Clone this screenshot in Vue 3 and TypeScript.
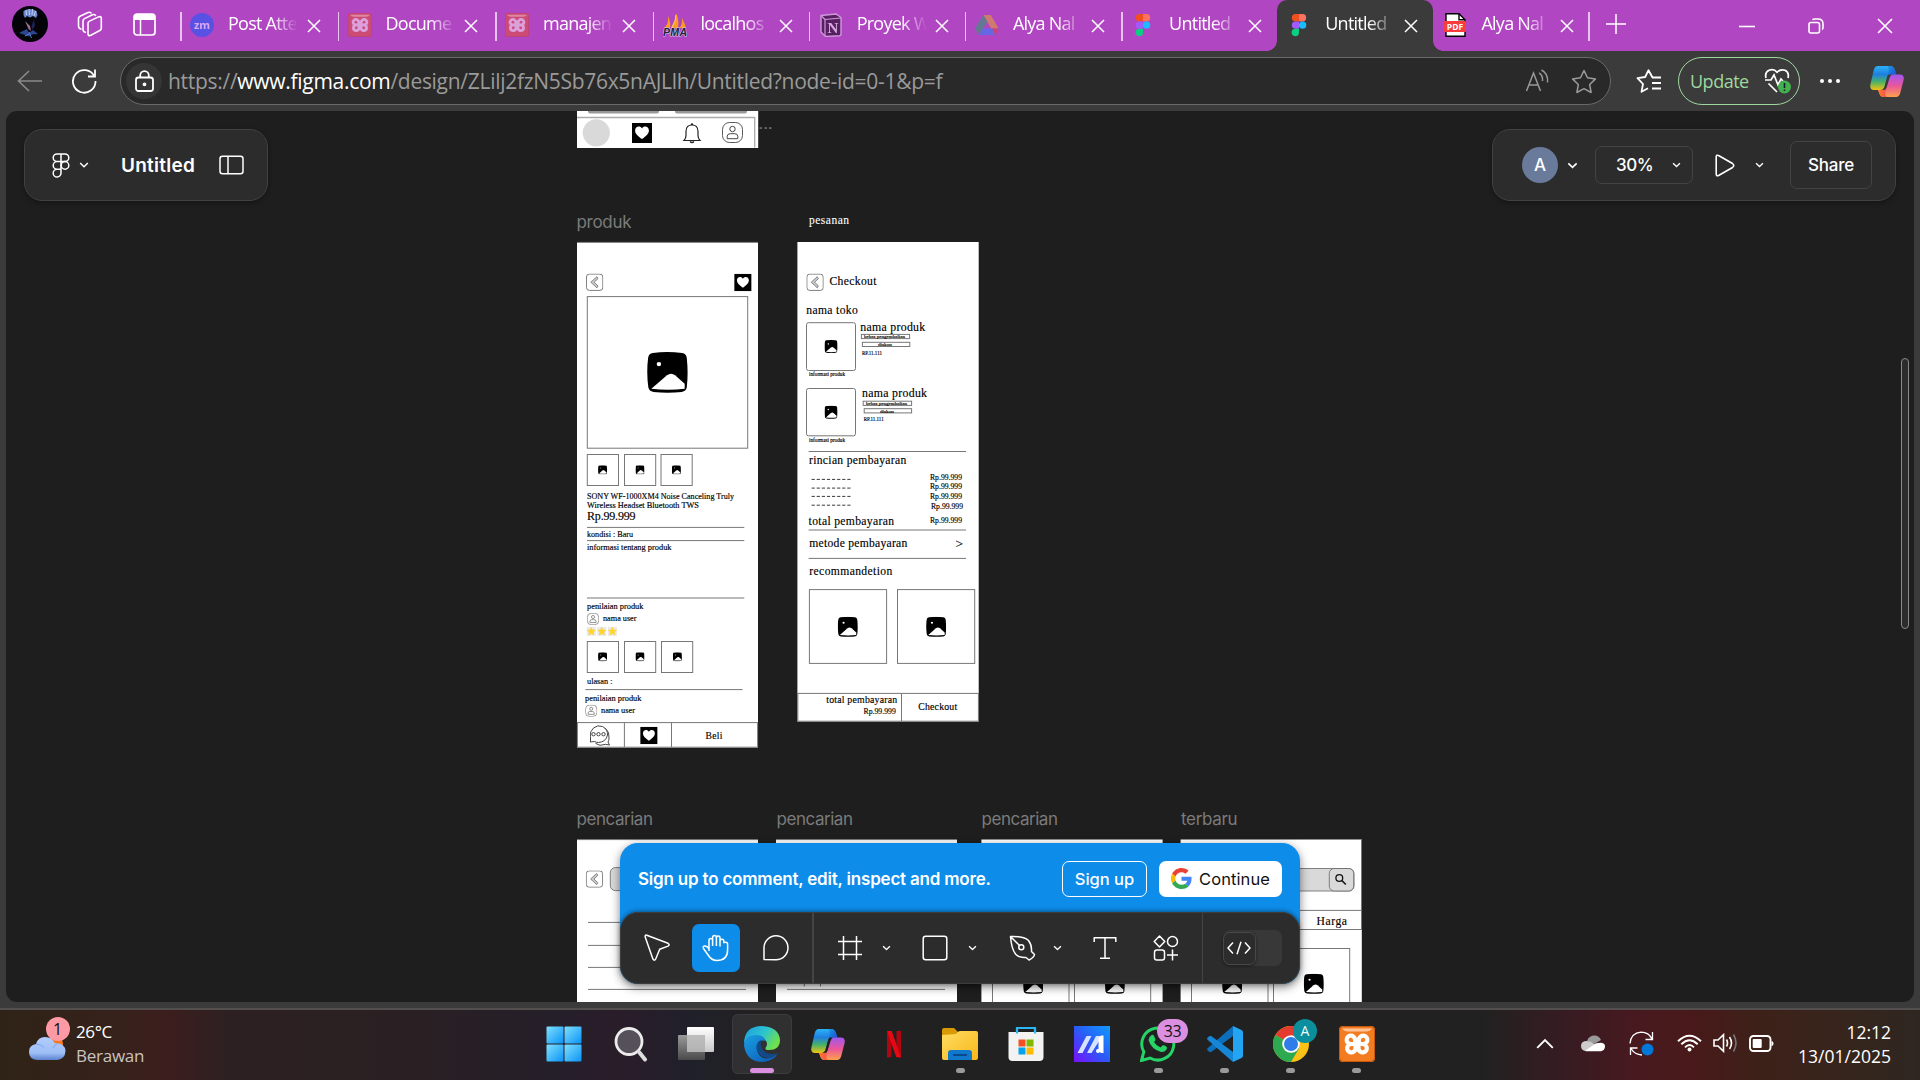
<script setup lang="ts">
interface Tab { title: string; icon: string; active?: boolean; plain?: boolean }
interface Label { x: number; y: number; w: number; t: string; s: number }
interface Box { x: number; y: number; w: number; h: number; r?: number }
interface Line { x1: number; y1: number; x2: number; y2: number }

const tabs: Tab[] = [
  { title: 'Post Atte', icon: 'zoom' },
  { title: 'Docume', icon: 'xampp' },
  { title: 'manajen', icon: 'xampp' },
  { title: 'localhos', icon: 'pma' },
  { title: 'Proyek W', icon: 'notion' },
  { title: 'Alya Nal', icon: 'drive' },
  { title: 'Untitled', icon: 'figma' },
  { title: 'Untitled', icon: 'figma', active: true },
  { title: 'Alya Nal', icon: 'pdf', plain: true },
]

const frames: Box[] = [
  { x: 577, y: 105, w: 181.2, h: 43 },
  { x: 577, y: 242, w: 181, h: 505.7 },
  { x: 797.4, y: 242, w: 181.3, h: 479.7 },
  { x: 577, y: 839.5, w: 181, h: 170 },
  { x: 776, y: 839.5, w: 181, h: 170 },
  { x: 981.4, y: 839.5, w: 181.2, h: 170 },
  { x: 1180.6, y: 839.5, w: 181.2, h: 170 },
]

const frameNames: Label[] = [
  { x: 576.5, y: 228, w: 55, t: 'produk', s: 17 },
  { x: 576.5, y: 825.4, w: 76.5, t: 'pencarian', s: 17 },
  { x: 776.5, y: 825.4, w: 76.5, t: 'pencarian', s: 17 },
  { x: 981.5, y: 825.4, w: 76.5, t: 'pencarian', s: 17 },
  { x: 1181, y: 825.4, w: 56.5, t: 'terbaru', s: 17 },
]

const copy: Label[] = [
  { x: 587, y: 498.7, w: 147, t: 'SONY WF-1000XM4 Noise Canceling Truly', s: 7.8 },
  { x: 587, y: 507.8, w: 112, t: 'Wireless Headset Bluetooth TWS', s: 7.8 },
  { x: 587, y: 519.6, w: 48.5, t: 'Rp.99.999', s: 12 },
  { x: 587, y: 537.3, w: 46, t: 'kondisi : Baru', s: 7.8 },
  { x: 587, y: 549.5, w: 84.5, t: 'informasi tentang produk', s: 7.8 },
  { x: 587, y: 609.3, w: 56.5, t: 'penilaian produk', s: 7.8 },
  { x: 603, y: 621.2, w: 33.5, t: 'nama user', s: 7.8 },
  { x: 587, y: 683.8, w: 25.5, t: 'ulasan :', s: 7.8 },
  { x: 585, y: 700.8, w: 56.5, t: 'penilaian produk', s: 7.8 },
  { x: 601, y: 712.8, w: 34, t: 'nama user', s: 7.8 },
  { x: 705.5, y: 739.2, w: 16.8, t: 'Beli', s: 9.6 },
  { x: 829.5, y: 285.2, w: 47, t: 'Checkout', s: 11.6 },
  { x: 806.3, y: 314, w: 51.4, t: 'nama toko', s: 11.6 },
  { x: 860.2, y: 331.4, w: 65, t: 'nama produk', s: 11.8 },
  { x: 862, y: 397.4, w: 65, t: 'nama produk', s: 11.8 },
  { x: 864, y: 338, w: 41, t: 'bebas pengembalian', s: 5 },
  { x: 866, y: 404.8, w: 41, t: 'bebas pengembalian', s: 5 },
  { x: 878, y: 346, w: 14, t: 'diskon', s: 5 },
  { x: 880, y: 412.6, w: 14, t: 'diskon', s: 5 },
  { x: 862, y: 354.6, w: 20, t: 'RP.11.111', s: 5.2 },
  { x: 863.7, y: 421, w: 20, t: 'RP.11.111', s: 5.2 },
  { x: 809, y: 376.4, w: 36, t: 'informasi produk', s: 5.2 },
  { x: 809, y: 442, w: 36, t: 'informasi produk', s: 5.2 },
  { x: 809, y: 464.2, w: 97.3, t: 'rincian pembayaran', s: 11.6 },
  { x: 930, y: 479.6, w: 32, t: 'Rp.99.999', s: 7.8 },
  { x: 930, y: 488.5, w: 32, t: 'Rp.99.999', s: 7.8 },
  { x: 930, y: 499, w: 32, t: 'Rp.99.999', s: 7.8 },
  { x: 931, y: 509.2, w: 32, t: 'Rp.99.999', s: 7.8 },
  { x: 930, y: 522.8, w: 32, t: 'Rp.99.999', s: 7.8 },
  { x: 808.6, y: 524.7, w: 85.4, t: 'total pembayaran', s: 11.6 },
  { x: 809.3, y: 546.6, w: 98, t: 'metode pembayaran', s: 11.6 },
  { x: 955.5, y: 548.4, w: 7.5, t: '>', s: 11.5 },
  { x: 809.3, y: 575, w: 83, t: 'recommandetion', s: 11.6 },
  { x: 826.2, y: 702.8, w: 71, t: 'total pembayaran', s: 9.8 },
  { x: 863.5, y: 713.6, w: 32.3, t: 'Rp.99.999', s: 7.8 },
  { x: 918.2, y: 709.5, w: 39, t: 'Checkout', s: 9.8 },
  { x: 1316.6, y: 924.6, w: 30.4, t: 'Harga', s: 11.6 },
]

const boxes: Box[] = [
  { x: 587.3, y: 296.6, w: 160.4, h: 151.6 },
  { x: 587.3, y: 454.5, w: 31.2, h: 31 }, { x: 624.5, y: 454.5, w: 31.2, h: 31 }, { x: 661, y: 454.5, w: 31.2, h: 31 },
  { x: 587.3, y: 641.5, w: 31.2, h: 31 }, { x: 624.5, y: 641.5, w: 31.2, h: 31 }, { x: 661.5, y: 641.5, w: 31.2, h: 31 },
  { x: 577.4, y: 722.6, w: 180.2, h: 24.6 },
  { x: 806.5, y: 322.7, w: 49, h: 47.8, r: 2 }, { x: 806.5, y: 388.5, w: 49, h: 47.3, r: 2 },
  { x: 861.4, y: 334.4, w: 48.2, h: 4.2 }, { x: 862.4, y: 342.3, w: 47.4, h: 4.2 },
  { x: 863.2, y: 401.2, w: 48.4, h: 4.2 }, { x: 864.2, y: 408.7, w: 47.4, h: 4.2 },
  { x: 809.4, y: 589.6, w: 77.2, h: 73.8 }, { x: 897.5, y: 589.6, w: 77.2, h: 73.8 },
  { x: 797.8, y: 693.4, w: 180.6, h: 27.8 },
  { x: 992.5, y: 948.5, w: 76.5, h: 70 }, { x: 1074.5, y: 948.5, w: 76.2, h: 70 },
  { x: 1191.5, y: 948.5, w: 76.5, h: 70 }, { x: 1273.5, y: 948.5, w: 76.2, h: 70 },
]

const lines: Line[] = [
  { x1: 587, y1: 527.4, x2: 744.3, y2: 527.4 }, { x1: 587, y1: 540.6, x2: 744.3, y2: 540.6 },
  { x1: 587, y1: 598, x2: 744.3, y2: 598 }, { x1: 585.3, y1: 689.6, x2: 742.6, y2: 689.6 },
  { x1: 624.4, y1: 722.6, x2: 624.4, y2: 747 }, { x1: 671.5, y1: 722.6, x2: 671.5, y2: 747 },
  { x1: 577, y1: 242.4, x2: 758, y2: 242.4 },
  { x1: 808.6, y1: 451.5, x2: 966, y2: 451.5 }, { x1: 808.6, y1: 530, x2: 966, y2: 530 },
  { x1: 808.6, y1: 558.4, x2: 966, y2: 558.4 }, { x1: 901.5, y1: 693.4, x2: 901.5, y2: 721 },
  { x1: 588, y1: 922.4, x2: 746, y2: 922.4 }, { x1: 588, y1: 945.4, x2: 746, y2: 945.4 },
  { x1: 588, y1: 967.4, x2: 746, y2: 967.4 }, { x1: 588, y1: 989.4, x2: 746, y2: 989.4 },
  { x1: 787, y1: 989.4, x2: 945, y2: 989.4 },
  { x1: 1180.6, y1: 910.4, x2: 1361.8, y2: 910.4 }, { x1: 1180.6, y1: 929.5, x2: 1361.8, y2: 929.5 },
  { x1: 1361.5, y1: 839.5, x2: 1361.5, y2: 929.5 },
  { x1: 804.3, y1: 984, x2: 804.3, y2: 986.4 }, { x1: 820.5, y1: 984, x2: 820.5, y2: 986.4 },
  { x1: 577, y1: 839.6, x2: 758, y2: 839.6 }, { x1: 776, y1: 839.6, x2: 957, y2: 839.6 },
]

const dashes = [479.4, 488.1, 496.4, 505.2]

const pictures: { x: number; y: number; s: number }[] = [
  { x: 646.8, y: 352, s: 41.4 },
  { x: 598, y: 465.3, s: 9.2 }, { x: 635.4, y: 465.3, s: 9.2 }, { x: 671.8, y: 465.3, s: 9.2 },
  { x: 598, y: 652.2, s: 9.2 }, { x: 635.4, y: 652.2, s: 9.2 }, { x: 672.8, y: 652.2, s: 9.2 },
  { x: 824.4, y: 340, s: 13.3 }, { x: 824.4, y: 405.6, s: 13.3 },
  { x: 837.6, y: 616.8, s: 20.4 }, { x: 926, y: 616.8, s: 20.4 },
  { x: 1023, y: 973.8, s: 20.4 }, { x: 1104.7, y: 973.8, s: 20.4 },
  { x: 1222, y: 973.8, s: 20.4 }, { x: 1303.6, y: 973.8, s: 20.4 },
]
const hearts = [{ x: 632, y: 123, s: 20 }, { x: 734.2, y: 273.8, s: 17.4 }, { x: 640.2, y: 726.8, s: 17.4 }]
const backs = [{ x: 586, y: 273.6 }, { x: 806.4, y: 273.6 }, { x: 585.8, y: 870.4 }]
const users = [{ x: 722, y: 122, s: 21 }, { x: 587, y: 613, s: 12 }, { x: 585.2, y: 704.8, s: 12 }]
const stars = [591.3, 601.8, 612.4]

const apps: { id: string; run?: boolean; on?: boolean; badge?: string }[] = [
  { id: 'windows' }, { id: 'search' }, { id: 'taskview' }, { id: 'edge', on: true }, { id: 'copilot' },
  { id: 'netflix' }, { id: 'explorer', run: true }, { id: 'store' }, { id: 'asus' },
  { id: 'whatsapp', run: true, badge: '33' }, { id: 'vscode', run: true }, { id: 'chrome', run: true, badge: 'A' },
  { id: 'xampp', run: true },
]
</script>

<template>
  <div class="screen">
    <svg class="defs" width="0" height="0" aria-hidden="true">
      <defs>
        <linearGradient id="gCopA" x1="0" y1="0" x2="0" y2="1"><stop offset="0" stop-color="#2bb3f5" /><stop offset=".35" stop-color="#1f7fe0" /><stop offset=".65" stop-color="#46b16a" /><stop offset="1" stop-color="#f2c40f" /></linearGradient>
        <linearGradient id="gCopB" x1="0" y1="0" x2="0" y2="1"><stop offset="0" stop-color="#a256f0" /><stop offset=".5" stop-color="#e9569c" /><stop offset="1" stop-color="#ffa04a" /></linearGradient>
        <linearGradient id="gCopC" x1="0" y1="0" x2="1" y2="1"><stop offset="0" stop-color="#1b9be8" /><stop offset="1" stop-color="#1a45d0" /></linearGradient>
        <linearGradient id="gCopD" x1="0" y1="0" x2="1" y2="0"><stop offset="0" stop-color="#ff7a2e" /><stop offset="1" stop-color="#ef5350" /></linearGradient>
        <linearGradient id="gWin" x1="0" y1="0" x2="1" y2="1"><stop offset="0" stop-color="#7fe0ff" /><stop offset="1" stop-color="#0a93f5" /></linearGradient>
        <linearGradient id="gEdgeTop" x1="0" y1="0" x2="1" y2=".5"><stop offset="0" stop-color="#1f9be0" /><stop offset=".55" stop-color="#2cc3cf" /><stop offset="1" stop-color="#6fe04e" /></linearGradient>
        <linearGradient id="gEdgeLow" x1="0" y1="0" x2="1" y2="1"><stop offset="0" stop-color="#1aa0e2" /><stop offset="1" stop-color="#0b55b4" /></linearGradient>
        <linearGradient id="gFold" x1="0" y1="0" x2="1" y2="1"><stop offset="0" stop-color="#ffdc62" /><stop offset="1" stop-color="#f8b71a" /></linearGradient>
        <linearGradient id="gAsus" x1="1" y1="0" x2="0" y2="1"><stop offset="0" stop-color="#0f9bff" /><stop offset=".5" stop-color="#2a5bf6" /><stop offset="1" stop-color="#7a10ff" /></linearGradient>
        <linearGradient id="gBack" x1="0" y1="0" x2="0" y2="1"><stop offset="0" stop-color="#9a9a9a" /><stop offset="1" stop-color="#4a4a4a" /></linearGradient>
        <linearGradient id="gFront" x1="0" y1="0" x2="0" y2="1"><stop offset="0" stop-color="#fff" /><stop offset="1" stop-color="#c8c8c8" /></linearGradient>
        <linearGradient id="gCloud" x1="0" y1="0" x2="0" y2="1"><stop offset="0" stop-color="#b3ceff" /><stop offset=".7" stop-color="#9dbdf5" /><stop offset="1" stop-color="#5c82cf" /></linearGradient>
        <symbol id="copilot" viewBox="0 0 34 31">
          <path d="M8 0h12c3 0 4 1.500 5 4.500l1.300 4H21c-2.500 0-3.500 1-4.300 4L14.300 21c-.8 2-2 3-4.300 3H4C1 24-.3 22 .4 18.500L3.500 5C4.300 1.800 5.500 0 8 0z" fill="url(#gCopA)" />
          <path d="M17 0h3c3 0 4 1.500 5 4.500l1.300 4H21c-2 0-3.200.8-4 3L18.500 5c.6-2.500.2-4-1.500-5z" fill="url(#gCopC)" />
          <path d="M26 31H14c-3 0-4-1.500-5-4.500L8 24h4.500c2.500 0 3.700-1 4.500-4l2.500-8c.8-2.500 2-3.500 4.300-3.500H30c3 0 4.300 2 3.600 5.500L30.500 26c-.8 3.200-2 5-4.500 5z" fill="url(#gCopB)" />
          <path d="M17 31h-3c-3 0-4-1.500-5-4.500L8 24h4.500c2 0 3.200-.8 4-3L15.500 26c-.6 2.500-.2 4 1.500 5z" fill="url(#gCopD)" />
          <path d="M17.600 9.800q.5-1.300 1.800-1.300h1.600q-1.300.8-1.800 2.500l-2.800 10.500q-.6 2.500-2.600 2.500h-.8q1.500-.7 2-2.500z" fill="currentColor" />
        </symbol>
        <symbol id="logo8" viewBox="0 0 36 36">
          <path d="M16 13.500A4.200 4.200 0 1 0 12.500 18A4.200 4.200 0 1 0 16.500 23V19.500M20 13.500A4.200 4.200 0 1 1 23.500 18A4.200 4.200 0 1 1 19.500 23V19.500M16.200 13v3M19.800 13v3M13 18h10" fill="none" stroke="currentColor" stroke-width="4.200" stroke-linecap="round" />
        </symbol>
        <symbol id="xampp" viewBox="0 0 36 36">
          <rect width="36" height="36" rx="4" fill="#f47c20" /><rect width="35" height="35" x=".5" y=".5" rx="4" fill="none" stroke="#c5580c" stroke-width="1" />
          <path d="M3 2.500h30q-2 3-6 3H9q-4 0-6-3z" fill="#ffc397" />
          <use href="#logo8" width="36" height="36" color="#fff" />
        </symbol>
        <symbol id="xamppDoc" viewBox="0 0 36 36">
          <rect width="36" height="36" rx="4" fill="#cc4c76" /><rect width="35" height="35" x=".5" y=".5" rx="4" fill="none" stroke="#bb3d7c" />
          <path d="M3 2.500h30q-2 3-6 3H9q-4 0-6-3z" fill="#dd87a4" />
          <use href="#logo8" width="36" height="36" color="#dca0dd" />
        </symbol>
        <symbol id="chev" viewBox="0 0 10 6"><path d="M1.200 1 5 4.700 8.800 1" fill="none" stroke="#fff" stroke-width="1.500" /></symbol>
        <symbol id="pic" viewBox="0 0 41 41"><path d="M6 1Q20 -.8 35 1q4 .6 4.600 5 1.600 15 0 29-.6 4-5 4.500-14 1.500-28 0Q2.300 39 1.500 35-.5 20 1.300 6 1.800 1.600 6 1z" fill="#000" /><circle cx="12" cy="12" r="2.200" fill="#fff" /><path d="M4.500 36.500 20 23q4-3 8 0l9.500 8.500v5q-16 2-33 0z" fill="#fff" /></symbol>
        <symbol id="heart" viewBox="0 0 18 18"><rect width="18" height="18" fill="#000" /><path d="M9 14.500C5 11.500 2.800 9.500 2.800 6.700c0-3.700 4.500-4.700 6.200-1.700 1.700-3 6.200-2 6.200 1.700 0 2.800-2.200 4.800-6.200 7.800z" fill="#fff" /></symbol>
        <symbol id="user" viewBox="0 0 21 21"><rect x=".5" y=".5" width="20" height="20" rx="7" fill="none" stroke="#444" stroke-width=".9" /><circle cx="10.500" cy="7" r="2.700" fill="none" stroke="#333" stroke-width=".9" /><path d="M5.200 16.700v-2.500q.2-2.500 3-2.500h4.600q2.800 0 3 2.500v2.500z" fill="none" stroke="#333" stroke-width=".9" /></symbol>
        <symbol id="back" viewBox="0 0 18 18"><rect x=".5" y=".5" width="17" height="17" rx="3" fill="#fff" stroke="#555" stroke-width=".8" /><path d="m11.300 3.200-6.300 5.800 6.300 5.800 1.200-2-4-3.800 4-3.800z" fill="#ccc" stroke="#555" stroke-width=".7" /></symbol>
      </defs>
    </svg>

    <header class="tabbar">
      <div class="profile">
        <svg width="36" height="36" viewBox="0 0 36 36"><circle cx="18" cy="18" r="18" fill="#030308" /><path d="M11.500 5q6.500-4 13 0l1 4-1.500 3-3-2-3 1.500-3-1.500-2 2-1.500-3z" fill="#6d86cc" /><path d="m14 4 .5 5M17 3l.5 6M20.500 3l-.5 6M23.500 5l-1.500 5" stroke="#cdd9fa" fill="none" stroke-width=".9" /><path d="m13 15 3.500 8 2.500 2-1-5z" fill="#a26c9c" /><path d="m7 27 8-4 2 4 4-3 5 4-6 .5-3 2-4-1.500z" fill="#2b4690" /><path d="m22 13 1 7-3 4-.5-4z" fill="#1c2450" /><path d="m17 26 2.500 6M13 30l4-2" stroke="#5f8bd0" stroke-width=".9" /></svg>
      </div>
      <svg class="spaces" width="26" height="26" viewBox="0 0 26 26" fill="none" stroke="#fff" stroke-width="1.600" stroke-linejoin="round" stroke-linecap="round"><path d="M11 12.500q0-1.700 1.500-2.400l9-4.200q2.800-1 2.800 1.400V17q0 1.700-1.500 2.500l-9 4.800q-2.800 1-2.800-1.500z" /><path d="M8.300 21.300Q6 20.800 6 18.300V10q0-1.700 1.500-2.400l8-3.800q2-.8 3 .6M4 18Q1.500 17.300 1.500 15V7.500q0-1.600 1.500-2.300L11 1.500q2-.8 3 .5" /></svg>
      <svg class="vtabs" width="23" height="23" viewBox="0 0 23 23"><rect x="1" y="1" width="21" height="21" rx="3" fill="none" stroke="#fff" stroke-width="1.700" /><path d="M1 4q0-3 3-3h15q3 0 3 3v3H1z" fill="#fff" /><path d="M7.500 7v15" stroke="#fff" stroke-width="1.500" /></svg>
      <nav class="tabs">
        <div v-for="(t, i) in tabs" :key="i" class="tab" :class="{ active: t.active, plain: t.plain, wide: i < 3 }">
          <svg class="fav" :class="{ dim: ['zoom', 'notion', 'drive'].includes(t.icon) }" width="24" height="24" viewBox="0 0 24 24">
            <template v-if="t.icon === 'zoom'"><circle cx="12" cy="12" r="12" fill="#3b55f0" /><text x="12" y="16" text-anchor="middle" class="zm">zm</text></template>
            <use v-else-if="t.icon === 'xampp'" href="#xamppDoc" width="24" height="24" />
            <template v-else-if="t.icon === 'pma'"><path d="M1.500 15Q6 10 5 3q3 6 2 12zM8 15Q13 8 13 0q3.500 8 2 15zM16.500 15q3-3 2.500-10 3 6 4 10z" fill="#ff9b1c" /><path d="M9 14q4-6 4-12" stroke="#ffd36b" fill="none" /><text x="12" y="23.300" text-anchor="middle" class="pma" textLength="24">PMA</text></template>
            <template v-else-if="t.icon === 'notion'"><path d="M2 2.500 17 1l5 3.500V21q0 1.500-1.500 1.700L6.500 23.500 2 19z" fill="#3a1440" stroke="#d9b4e4" stroke-width="1.400" /><path d="M6 6.500 22 5M6 6.500V23M2.500 3 6 6.500" stroke="#d9b4e4" stroke-width="1.200" /><text x="14" y="20" text-anchor="middle" class="nt">N</text></template>
            <template v-else-if="t.icon === 'drive'"><path d="M8.300 2h7.400L24 16h-7.500z" fill="#d98a55" /><path d="m8.300 2 3.900 6.500L4 22 0 15.500z" fill="#498a82" /><path d="M7.800 15.500H24L20 22H4z" fill="#4d72f0" /><path d="M17 15.500h7L20 22z" fill="#db3f58" /></template>
            <template v-else-if="t.icon === 'figma'"><path d="M12 1H8.500a3.700 3.700 0 0 0 0 7.400H12z" fill="#f24e1e" /><path d="M12 1h3.500a3.700 3.700 0 0 1 0 7.400H12z" fill="#ff7262" /><path d="M12 8.400H8.500a3.700 3.700 0 0 0 0 7.400H12z" fill="#a259ff" /><circle cx="15.600" cy="12.100" r="3.700" fill="#1abcfe" /><path d="M12 15.800H8.500a3.700 3.700 0 1 0 3.500 3.700z" fill="#0acf83" /></template>
            <template v-else><path d="M3 .7h13l6 6v16.600H3z" fill="#fff" stroke="#000" stroke-width="1.400" /><path d="M16 .7v6h6" fill="none" stroke="#000" stroke-width="1.400" /><rect x="1" y="8" width="22" height="11" rx="1" fill="#fa3c3c" /><text x="12" y="16.600" text-anchor="middle" class="pdf">PDF</text></template>
          </svg>
          <span class="tt">{{ t.title }}</span>
          <svg class="x" width="14" height="14" viewBox="0 0 14 14"><path d="m1 1 12 12M13 1 1 13" stroke="#fff" stroke-width="1.500" /></svg>
        </div>
      </nav>
      <svg class="plus" width="22" height="22" viewBox="0 0 22 22"><path d="M11 1v20M1 11h20" stroke="#fff" stroke-width="1.500" /></svg>
      <div class="winctl">
        <svg width="16" height="16" viewBox="0 0 16 16"><path d="M0 8.500h16" stroke="#fff" stroke-width="1.600" /></svg>
        <svg width="16" height="16" viewBox="0 0 16 16" fill="none" stroke="#fff" stroke-width="1.600"><rect x="1" y="4.500" width="10.500" height="10.500" rx="2" /><path d="M4.500 1.700Q5 1 7 1h3q5 0 5 5v3q0 2-.8 2.500" /></svg>
        <svg width="16" height="16" viewBox="0 0 16 16"><path d="m1 1 14 14M15 1 1 15" stroke="#fff" stroke-width="1.600" /></svg>
      </div>
    </header>

    <div class="addr">
      <svg class="goback" width="26" height="22" viewBox="0 0 26 22" fill="none" stroke="#8b8b8b" stroke-width="1.600"><path d="M25 11H1.500M12 1 1.500 11 12 21" /></svg>
      <svg class="reload" width="26" height="26" viewBox="0 0 26 26" fill="none" stroke="#fff" stroke-width="1.800"><path d="M23.400 8.500A11.300 11.300 0 1 0 24.500 13M24 1.500V8.500H17" /></svg>
      <div class="url">
        <span class="lock"><svg width="19" height="22" viewBox="0 0 19 22" fill="none" stroke="#fff" stroke-width="1.800"><rect x="1" y="7.500" width="17" height="13.500" rx="2.500" /><path d="M5.200 7.500V5.500a4.300 4.300 0 0 1 8.600 0v2" /><circle cx="9.500" cy="14.300" r="1" fill="#fff" /></svg></span>
        <span class="link">https://<b>www.figma.com</b>/design/ZLilj2fzN5Sb76x5nAJLlh/Untitled?node-id=0-1&amp;p=f</span>
        <svg class="aloud" width="25" height="24" viewBox="0 0 25 24" fill="none" stroke="#9a9a9a" stroke-width="1.500"><path d="M1.500 22 8.500 4l7 18M4 16h9M14 4q4 2 3.500 8M16.500 1q7 3.500 6 12.500" /></svg>
        <svg class="star" width="26" height="25" viewBox="0 0 26 25" fill="none" stroke="#9a9a9a" stroke-width="1.500" stroke-linejoin="round"><path d="m13 1.500 3.500 7.300 8 1.100-5.800 5.600 1.400 8L13 19.700l-7.100 3.800 1.400-8L1.500 9.900l8-1.100z" /></svg>
      </div>
      <svg class="favs" width="26" height="25" viewBox="0 0 26 25" fill="none" stroke="#fff" stroke-width="1.800" stroke-linejoin="round"><path d="M25 8.500h-8.500L12.500 1.200 9.200 8 1.500 9.200 7 15 5.500 22.800 12 19.300M16 14h9M16 19.500h9" /></svg>
      <div class="update"><span>Update</span>
        <svg width="28" height="26" viewBox="0 0 28 26" fill="none" stroke="#fff" stroke-width="1.700"><path d="M2 10Q.5 4.500 5 2.300q5-1.800 8 2Q16.500.6 21 2.300q4.500 2.200 3 7.700M1 12h6l3-5 4 10 3-6 2 2M4.500 15.500 13 24" /><circle cx="20.500" cy="19" r="6.500" fill="#44b04e" stroke="none" /><path d="M20.500 15v5M20.500 21.500V23" stroke="#123" stroke-width="1.600" /></svg>
      </div>
      <span class="more"><i /><i /><i /></span>
      <svg class="cop" width="34" height="31"><use href="#copilot" width="34" height="31" /></svg>
    </div>

    <main class="page">
      <svg class="canvas" width="1908" height="891" viewBox="6 111 1908 891">
        <g>
          <rect v-for="(f, i) in frames" :key="'f' + i" :x="f.x" :y="f.y" :width="f.w" :height="f.h" fill="#fff" />
        </g>
        <text v-for="(l, i) in frameNames" :key="'n' + i" class="fname" :x="l.x" :y="l.y" :textLength="l.w" :font-size="l.s">{{ l.t }}</text>
        <text class="serif light" x="809" y="223.600" textLength="40" font-size="11.500">pesanan</text>

        <rect x="588" y="106" width="71" height="7.500" rx="2" fill="#999" /><rect x="675" y="106" width="72" height="7.500" rx="2" fill="#999" />
        <path d="M577 117.500h177.700V147.500" fill="none" stroke="#aaa" stroke-width="1.300" />
        <circle cx="596.300" cy="132.800" r="13.600" fill="#d9d9d9" />
        <path d="M684 140.500q2-2 2-5v-4q0-6.500 6-6.500t6 6.500v4q0 3 2 5zM690 141.500q2 2 4 0M691 124.500q1-1.500 2 0" fill="none" stroke="#222" stroke-width="1.200" />
        <g fill="#777"><rect x="759.500" y="127.300" width="2.500" height="1.500" /><rect x="764.500" y="127.300" width="2.500" height="1.500" /><rect x="769" y="127.300" width="2.500" height="1.500" /></g>

        <g fill="#d9d9d9" stroke="#666" stroke-width=".8">
          <rect x="610.300" y="867.600" width="120" height="23" rx="5" />
          <rect x="1234" y="868.500" width="120" height="22.500" rx="5" /><rect x="1329.300" y="868.500" width="24.400" height="22.500" rx="5" />
        </g>
        <circle cx="1339.300" cy="878" r="3.400" fill="none" stroke="#111" stroke-width="1.300" /><path d="m1341.800 880.500 4 4" stroke="#111" stroke-width="1.600" />

        <rect v-for="(b, i) in boxes" :key="'b' + i" class="box" :x="b.x" :y="b.y" :width="b.w" :height="b.h" :rx="b.r ?? 0" />
        <line v-for="(l, i) in lines" :key="'l' + i" class="rule" v-bind="l" />
        <line v-for="y in dashes" :key="y" x1="811.600" :y1="y" x2="850.500" :y2="y" stroke="#222" stroke-width=".9" stroke-dasharray="3.200 1.900" />
        <use v-for="(p, i) in pictures" :key="'p' + i" href="#pic" :x="p.x" :y="p.y" :width="p.s" :height="p.s" />
        <use v-for="(p, i) in hearts" :key="'h' + i" href="#heart" :x="p.x" :y="p.y" :width="p.s" :height="p.s" />
        <use v-for="(p, i) in backs" :key="'k' + i" href="#back" :x="p.x" :y="p.y" width="17.300" height="17.300" />
        <use v-for="(p, i) in users" :key="'u' + i" href="#user" :x="p.x" :y="p.y" :width="p.s" :height="p.s" />
        <g v-for="x in stars" :key="x" :transform="`translate(${x} 631.300)`">
          <rect x="-4.500" y="-4.500" width="9" height="9" fill="#e9e9ee" />
          <path d="m0-4 1.200 2.600 2.900.3-2.200 1.900.7 2.900L0 2.300l-2.600 1.400.7-2.900-2.200-1.900 2.900-.3z" fill="#ffd42c" stroke="#ffd42c" stroke-width=".6" />
        </g>
        <g fill="#fff" stroke="#333" stroke-width=".9">
          <path d="M605 728q5 4 4 10 0 3-1 4l1.500 3-4-.7q-6 2.500-10-1" />
          <path d="M590.500 741.500v-5q-1-5 3-8.500 4-3.500 9-1.500 5.500 3 5 8.500-1.500 7-9 7.500-2 0-4-1l-4.500.5z" />
          <circle cx="593.500" cy="734.200" r="1.700" /><circle cx="598.500" cy="734.200" r="1.700" /><circle cx="603.500" cy="734.200" r="1.700" />
        </g>
        <text v-for="(l, i) in copy" :key="'t' + i" class="serif" :x="l.x" :y="l.y" :textLength="l.w" :font-size="l.s" :lengthAdjust="l.s > 9 && l.t !== '>' ? 'spacing' : 'spacingAndGlyphs'">{{ l.t }}</text>
      </svg>

      <section class="panel left">
        <svg class="flogo" width="18" height="25" viewBox="0 0 18 25" fill="none" stroke="#fff" stroke-width="1.500"><path d="M9 1H5a3.800 3.800 0 0 0 0 7.600h4zM9 1h4a3.800 3.800 0 0 1 0 7.600H9zM9 8.600H5a3.800 3.800 0 0 0 0 7.600h4zM9 16.200H5a3.900 3.900 0 1 0 4 3.900z" /><circle cx="13" cy="12.400" r="3.800" /></svg>
        <svg class="c1" width="10" height="6"><use href="#chev" /></svg>
        <strong>Untitled</strong>
        <svg class="side" width="25" height="20" viewBox="0 0 25 20" fill="none" stroke="#fff" stroke-width="1.500"><rect x="1" y="1.200" width="23" height="17.500" rx="2.500" /><path d="M9 1v18" /></svg>
      </section>

      <section class="panel right">
        <span class="ava">A</span>
        <svg class="c2" width="11" height="7"><use href="#chev" width="11" height="7" /></svg>
        <span class="zoom"><em>30%</em><svg width="9" height="6"><use href="#chev" width="9" height="6" /></svg></span>
        <svg class="play" width="20" height="23" viewBox="0 0 20 23" fill="none" stroke="#fff" stroke-width="1.600"><path d="M1.200 3.200q0-3 2.800-1.500L17.500 9.500q2.500 2 0 4L4 21.300q-2.800 1.500-2.800-1.500z" /></svg>
        <svg class="c3" width="9" height="6"><use href="#chev" width="9" height="6" /></svg>
        <span class="share">Share</span>
      </section>

      <i class="scroll" />

      <section class="dock">
        <div class="signup">
          <span class="msg">Sign up to comment, edit, inspect and more.</span>
          <span class="su">Sign up</span>
          <span class="go">
            <svg width="21" height="21" viewBox="0 0 48 48"><path fill="#ea4335" d="M24 9.500c3.540 0 6.710 1.220 9.210 3.600l6.850-6.850C35.900 2.380 30.470 0 24 0 14.620 0 6.510 5.380 2.560 13.220l7.980 6.190C12.430 13.720 17.740 9.500 24 9.500z" /><path fill="#4285f4" d="M46.980 24.550c0-1.570-.15-3.090-.38-4.550H24v9.020h12.940c-.58 2.960-2.260 5.480-4.780 7.180l7.730 6c4.510-4.180 7.090-10.360 7.090-17.650z" /><path fill="#fbbc05" d="M10.530 28.590a14.500 14.500 0 0 1 0-9.180l-7.980-6.190a24 24 0 0 0 0 21.560z" /><path fill="#34a853" d="M24 48c6.480 0 11.930-2.130 15.890-5.810l-7.730-6c-2.150 1.450-4.920 2.300-8.160 2.300-6.260 0-11.570-4.220-13.470-9.910l-7.980 6.190C6.510 42.620 14.620 48 24 48z" /></svg>
            Continue</span>
        </div>
        <div class="tools">
          <svg class="t-move" width="27" height="28" viewBox="0 0 27 28"><path d="M2.800 1.200 24 9.300q2.300 1.300 0 2.800l-8.300 3.200-4 9.700q-1.300 2.300-2.800 0L1.200 3Q1 .5 2.800 1.200z" /></svg>
          <span class="hand"><svg width="27" height="28" viewBox="0 0 27 28"><path d="M7 17V6.500q0-2 1.800-2t1.800 2V12M10.600 12V3.700q0-2.200 1.900-2.200t1.900 2.200V12M14.400 12V4q0-2 1.800-2t1.800 2v8.500M18 12.500V7.200q0-2 1.900-2t1.900 2V9M21.800 9.200q0-1 1.800-1 2 0 2 2V16q0 10.500-11 10.500-5 0-8.500-5.500L1.500 14.500q-1-2 1-2.500 2.500-.5 4.500 3" /></svg></span>
          <svg class="t-com" width="26" height="26" viewBox="0 0 26 26"><path d="M1 24.500V13A12 12 0 1 1 13 24.800z" /></svg>
          <i class="sep s1" />
          <svg class="t-frame" width="26" height="26" viewBox="0 0 26 26"><path d="M6.500 1v24M19.500 1v24M1 6.500h24M1 19.500h24" /></svg>
          <svg class="cv a" width="9" height="6"><use href="#chev" width="9" height="6" /></svg>
          <svg class="t-rect" width="26" height="26" viewBox="0 0 26 26"><rect x="1.200" y="1.200" width="23.600" height="23.600" rx="2.500" /></svg>
          <svg class="cv b" width="9" height="6"><use href="#chev" width="9" height="6" /></svg>
          <svg class="t-pen" width="27" height="27" viewBox="0 0 27 27"><path d="M1.500 1.500Q15 1 19.500 5.500q3.500 4.500 3 11l3 3q-.5 3-5.500 5.500l-3-2.500Q10 23 6.500 19 2.500 14 1.500 1.500zL10.500 10.500" /><circle cx="12.300" cy="12.300" r="2.500" /></svg>
          <svg class="cv c" width="9" height="6"><use href="#chev" width="9" height="6" /></svg>
          <svg class="t-text" width="24" height="24" viewBox="0 0 24 24"><path d="M1.200 6V1.700h21.600V6M12 1.700v20.600M7 22.300h10" /></svg>
          <svg class="t-comp" width="26" height="26" viewBox="0 0 26 26"><path d="m6.500 1 5.300 5.500-5.300 5.500L1.200 6.500z" /><circle cx="19.500" cy="6.500" r="5" /><rect x="1.500" y="15" width="10" height="10" rx="2.300" /><path d="M19.500 14.500v11M14 20h11" /></svg>
          <i class="sep s2" />
          <span class="dev"><b><svg width="24" height="14" viewBox="0 0 24 14"><path d="M6 1.500 1 7l5 5.500M18 1.500 23 7l-5 5.500M14 .8l-4 12.400" /></svg></b></span>
        </div>
      </section>
    </main>

    <footer class="taskbar">
      <div class="weather">
        <div class="wicon">
          <svg width="41" height="46" viewBox="0 0 41 46"><circle cx="26" cy="27" r="8" fill="#f57a1f" /><path d="M8 43q-8-1-8-8 0-7 7-8 2-7 9-7 7 0 9.500 6Q36 26 36.500 34q-.5 8-8 9z" fill="url(#gCloud)" /><path d="M7 27q5 0 8 3.500M24 31q2-4 5-5" stroke="#7da3e8" fill="none" /></svg>
          <span>1</span>
        </div>
        <p><span>26°C</span><small>Berawan</small></p>
      </div>

      <div class="apps">
        <div v-for="a in apps" :key="a.id" class="app" :class="{ on: a.on }">
          <svg width="36" height="36" viewBox="0 0 36 36">
            <g v-if="a.id === 'windows'" fill="url(#gWin)"><rect x=".5" y=".5" width="17" height="17" rx="1" /><rect x="18.500" y=".5" width="17" height="17" rx="1" /><rect x=".5" y="18.500" width="17" height="17" rx="1" /><rect x="18.500" y="18.500" width="17" height="17" rx="1" /></g>
            <g v-else-if="a.id === 'search'"><circle cx="17" cy="15.500" r="13" fill="#55505a" stroke="#ececec" stroke-width="2.800" /><path d="m27 26 6 7.500" stroke="#ddd" stroke-width="4" stroke-linecap="round" /></g>
            <g v-else-if="a.id === 'taskview'"><rect x="0" y="9" width="27" height="25" rx="1" fill="url(#gBack)" /><rect x="9" y="1" width="27" height="25" rx="1" fill="url(#gFront)" /><rect x="9" y="9" width="18" height="17" fill="#aaa" opacity=".7" /></g>
            <g v-else-if="a.id === 'edge'"><path d="M0 18Q0 0 18 0q17 1 18 14 0 10-11 10-5 0-3-3 2-3 0-6-4-6-11-5Q2 11 0 18z" fill="url(#gEdgeTop)" /><path d="M0 19Q1 9 12 9q8 0 10 6-7-2-9 5-1 8 6 12 8 2 15-5-4 8-15 9Q2 36 0 19z" fill="url(#gEdgeLow)" /><path d="M17 14q-6 3-4 10 3 8 12 8 4-1 8.500-5-5 2-11 0-7-3-5.500-13z" fill="#114a8b" /></g>
            <use v-else-if="a.id === 'copilot'" href="#copilot" x="1" y="3" width="34" height="31" />
            <g v-else-if="a.id === 'netflix'"><path d="M11 5h4.500v26L11 31.500zM20.500 5H25v26.500l-4.500-.5z" fill="#b1060f" /><path d="M11 5h4.700L25 31.500l-4.800-.5z" fill="#e50914" /></g>
            <g v-else-if="a.id === 'explorer'"><path d="M0 4q0-2 2-2h10l4 4v6H0z" fill="#d99a05" /><path d="M0 9 14 8q2-3 4-3h16q2 0 2 2v25q0 2-2 2H2q-2 0-2-2z" fill="url(#gFold)" /><path d="M6 34V27q0-3 3-3h18q3 0 3 3v7z" fill="#1278cc" /><path d="M11 29h14" stroke="#0a4a8c" stroke-width="2" /></g>
            <g v-else-if="a.id === 'store'"><path d="M9 8V2h18v6" fill="none" stroke="#29b6f2" stroke-width="2.200" /><path d="M.5 6h35v25q0 4-4 4h-27q-4 0-4-4z" fill="#f2f2f2" /><path d="M9 2v5.500M27 2v5.500" stroke="#29b6f2" stroke-width="2.200" /><path d="M10.500 13.500h7v7h-7z" fill="#f25022" /><path d="M18.500 13.500h7v7h-7z" fill="#7fba00" /><path d="M10.500 21.500h7v7h-7z" fill="#00a4ef" /><path d="M18.500 21.500h7v7h-7z" fill="#ffb900" /></g>
            <g v-else-if="a.id === 'asus'"><rect width="36" height="36" fill="url(#gAsus)" /><path d="m3.500 27 9-17h5l-9 17zM13 27l9-17h5v2L17.500 27z" fill="#d6e2ff" /><path d="M24.500 12 27 9.500h2.500V27H27l-2.500-2z" fill="#fff" /><circle cx="24" cy="25" r="2" fill="#fff" /></g>
            <g v-else-if="a.id === 'whatsapp'"><path d="m1.500 34.500 2.300-8.700A16 16 0 1 1 10 32z" fill="none" stroke="#25d366" stroke-width="3" /><path d="M11 9.500q2-1.500 3 .5l1.500 3.500q0 1-1.500 2.500 2.500 4 6.500 5.500l2-2q1-.7 4 1.300 1 .7 0 2.700-2 3-5.500 2.500Q11 23 8.500 14q.5-3.500 2.500-4.500z" fill="#25d366" /></g>
            <g v-else-if="a.id === 'vscode'"><path d="M26 0v10L4.500 25.800q-1.200.8-2.300 0L.6 24.300q-1-1 0-2z" fill="#0c6fbd" /><path d="M26 36V26L4.500 10.200q-1.200-.8-2.300 0L.6 11.700q-1 1 0 2z" fill="#1687d6" /><path d="m26 0 8.500 4q1.500.8 1.500 2.500v23q0 1.700-1.500 2.500L26 36z" fill="#23a5f3" /></g>
            <g v-else-if="a.id === 'chrome'"><circle cx="18" cy="18" r="18" fill="#fbc116" /><path d="M18 18 2.400 9A18 18 0 0 1 33.600 9z" fill="#e33b2e" /><path d="M2.400 9A18 18 0 0 0 18 36l8-13.500-8-4.500z" fill="#2da94f" /><circle cx="18" cy="18" r="8.800" fill="#fff" /><circle cx="18" cy="18" r="7" fill="#2f7de9" /></g>
            <use v-else href="#xampp" width="36" height="36" />
          </svg>
          <span v-if="a.badge" class="badge" :class="{ teal: a.badge === 'A' }">{{ a.badge }}</span>
          <i v-if="a.on" class="bar" /><i v-else-if="a.run" class="dot" />
        </div>
      </div>

      <div class="tray">
        <svg width="18" height="11" viewBox="0 0 18 11"><path d="M1.200 9.800 9 2l7.800 7.800" fill="none" stroke="#fff" stroke-width="1.900" /></svg>
        <svg class="od" width="24" height="17" viewBox="0 0 24 17"><path d="M6 6q2-5.500 7.500-5.500Q18 .5 20 5l-7 4z" fill="#999" /><path d="M4 16q-4-1-4-5 0-5 6-5 4 0 7 3l8 6z" fill="#ccc" /><path d="m4 15.800 11-7.500q9-2 9 3 0 4-4 5H5z" fill="#fff" /></svg>
        <svg class="sy" width="25" height="25" viewBox="0 0 25 25" fill="none" stroke="#fff" stroke-width="1.300"><path d="M1 12.500Q2 2 12 1.200q8 0 11 7M23.500 1v7.500h-7M1.500 24v-7h7M2 17.500q3.500 6 11 6.500" /><circle cx="18.500" cy="18.500" r="6" fill="#0078d7" stroke="none" /></svg>
        <svg class="wf" width="25" height="18" viewBox="0 0 25 18" fill="none" stroke="#fff" stroke-width="1.900"><path d="M1 7.200q11.500-11 23 0M4.300 10.300q8.200-8 16.400 0M8 13.300q4.500-4.500 9 0" /><circle cx="12.500" cy="15.500" r="2" fill="#fff" stroke="none" /></svg>
        <svg class="sp" width="26" height="20" viewBox="0 0 26 20" fill="none" stroke="#fff" stroke-width="1.600"><path d="M1 7h4l5.500-5.300v16.600L5 13H1zM13.500 6.500q2 3.500 0 7M16.500 4q4 6 0 12" /><path d="M20.500 1.500q5 8.500 0 17" stroke="#777" /></svg>
        <svg class="bt" width="25" height="17" viewBox="0 0 25 17"><rect x="1" y="1" width="20.500" height="15" rx="3.500" fill="none" stroke="#fff" stroke-width="1.900" /><rect x="3.700" y="4" width="9" height="9" rx="1" fill="#fff" /><path d="M22.500 6q2 0 2 2.500t-2 2.500z" fill="#fff" /></svg>
        <p class="clock"><span>12:12</span><span>13/01/2025</span></p>
      </div>
    </footer>
  </div>
</template>

<style>
html, body { margin: 0; background: #3b3b3b; overflow: hidden; }
</style>

<style scoped>
.screen { width: 1920px; height: 1080px; display: flex; flex-direction: column; background: #3b3b3b; overflow: hidden; font-family: "Open Sans", "Noto Sans", sans-serif; color: #fff; }
.defs { position: absolute; }
svg { display: block; flex: none; }
p { margin: 0; }

.tabbar { height: 51px; background: #b146c2; display: flex; flex: none; box-sizing: border-box; padding-left: 12px; align-items: flex-start; }
.profile { margin-top: 6px; }
.spaces { margin: 11px 0 0 29px; }
.vtabs { margin: 13px 0 0 30px; }
.tabs { display: flex; margin-left: 24px; width: 1410px; height: 51px; flex: none; }
.tab { width: 156.200px; height: 51px; display: flex; align-items: center; position: relative; flex: none; box-sizing: border-box; padding: 0 0 2px 10px; }
.tab.wide { width: 157.500px; }
.tab::before { content: ""; position: absolute; left: 0; top: 12px; height: 29px; width: 1.500px; background: #e6c4ec; }
.tab.plain::after { content: ""; position: absolute; right: 0; top: 12px; height: 29px; width: 1.500px; background: #e6c4ec; }
.tab.plain::before { display: none; }
.tab.active { background: #3b3b3b; border-radius: 10px 10px 0 0; }
.tab.active::before { left: -10px; top: 41px; width: 10px; height: 10px; background: radial-gradient(circle at 0 0, #b146c2 9.500px, #3b3b3b 10px); }
.tab.active::after { content: ""; position: absolute; right: -10px; top: 41px; width: 10px; height: 10px; background: radial-gradient(circle at 100% 0, #b146c2 9.500px, #3b3b3b 10px); }
.fav.dim { opacity: .75; }
.tt { margin-left: 14px; width: 76px; margin-right: -9px; height: 29px; font-size: 18px; line-height: 26px; letter-spacing: -.75px; white-space: nowrap; -webkit-mask-image: linear-gradient(90deg, #000 58%, transparent 92%); mask-image: linear-gradient(90deg, #000 58%, transparent 92%); }
.x { margin-left: 11.500px; margin-top: 2px; }
.zm { font: 700 11px "Open Sans", sans-serif; fill: #e2c8ff; }
.pma { font: italic 700 10.500px "Liberation Sans", sans-serif; fill: #1e2240; stroke: #cfc3ea; stroke-width: 1.200px; paint-order: stroke; }
.nt { font: 700 15px "Liberation Serif", serif; fill: #e6c9ee; }
.pdf { font: 700 8.500px "Open Sans", sans-serif; fill: #fff; }
.plus { margin: 12.500px 0 0 15px; }
.winctl { display: flex; gap: 53px; margin: 18px 0 0 112px; }

.addr { height: 60px; display: flex; align-items: center; flex: none; position: relative; color: #3b3b3b; }
.goback { margin-left: 17px; }
.reload { margin-left: 28px; }
.url { width: 1491px; height: 48px; margin-left: 23px; border: 1.500px solid #696969; border-radius: 24px; background: #292929; display: flex; align-items: center; box-sizing: border-box; flex: none; }
.lock { width: 36px; height: 36px; margin-left: 5px; border-radius: 18px; background: #353535; display: flex; align-items: center; justify-content: center; }
.link { margin-left: 6px; width: 1342px; font-size: 21px; line-height: 30px; letter-spacing: -.29px; color: #9a9a9a; white-space: nowrap; }
.link b { font-weight: 400; color: #fff; }
.aloud { margin-left: 15px; }
.star { margin-left: 21px; }
.favs { margin-left: 25px; }
.update { width: 122px; height: 48px; margin-left: 16px; border: 1.500px solid #9fd89f; border-radius: 24px; box-sizing: border-box; display: flex; align-items: center; justify-content: space-between; padding: 0 7px 0 11px; color: #9fd89f; font-size: 18px; letter-spacing: -.5px; }
.more { display: flex; gap: 4px; margin-left: 20px; }
.more i { width: 4px; height: 4px; border-radius: 2px; background: #fff; }
.cop { margin-left: 30px; }

.page { width: 1908px; height: 891px; margin-left: 6px; flex: none; position: relative; border-radius: 11px; overflow: hidden; background: #1e1e1e; }
.fname { font-family: Inter, sans-serif; fill: #7b7b7b; }
.serif { font-family: "Liberation Serif", serif; fill: #000; stroke: #000; stroke-width: .15px; }
.serif.light { fill: #fff; stroke: #fff; stroke-width: .1px; }
.box { fill: none; stroke: #777; stroke-width: 1; }
.rule { stroke: #777; stroke-width: 1; }

.panel { position: absolute; top: 18px; height: 72px; background: #2c2c2c; border: 1px solid #414141; border-radius: 18px; box-sizing: border-box; box-shadow: 0 2px 5px rgba(0, 0, 0, .3); display: flex; align-items: center; font-family: Inter, sans-serif; font-size: 17px; font-weight: 500; }
.left { left: 18px; width: 244px; }
.flogo { margin-left: 27px; }
.c1 { margin-left: 9px; }
.left strong { margin-left: 32px; width: 75px; font-weight: 600; font-size: 19px; letter-spacing: .25px; white-space: nowrap; }
.side { margin-left: 23px; }
.right { left: 1486px; width: 404px; }
.ava { width: 36px; height: 36px; margin-left: 29px; border-radius: 18px; background: #697a9b; text-align: center; line-height: 36px; }
.c2 { margin-left: 9px; }
.zoom { width: 98px; height: 38px; margin-left: 17px; border: 1px solid #444; border-radius: 7px; box-sizing: border-box; display: flex; align-items: center; justify-content: space-between; padding: 0 11px 0 20px; }
.zoom em { font-style: normal; letter-spacing: -.5px; }
.play { margin-left: 22px; }
.c3 { margin-left: 20px; }
.share { width: 82px; height: 48px; margin-left: 26px; border: 1px solid #444; border-radius: 7px; box-sizing: border-box; text-align: center; line-height: 46px; letter-spacing: -.2px; }
.scroll { position: absolute; left: 1895px; top: 247px; width: 8px; height: 271px; border: 1px solid #8a8a8a; border-radius: 4px; box-sizing: border-box; background: #2c2c2c; }

.dock { position: absolute; left: 614px; top: 732px; width: 680px; height: 141px; border-radius: 18px; background: #0d8ce9; box-shadow: 0 3px 10px rgba(0, 0, 0, .5); font-family: Inter, sans-serif; }
.signup { height: 69px; display: flex; align-items: center; padding-top: 2px; box-sizing: border-box; font-size: 16.500px; }
.msg { width: 424px; margin-left: 18px; font-size: 17px; font-weight: 600; letter-spacing: -.2px; white-space: nowrap; flex: none; }
.su { width: 85px; height: 36px; border: 1.500px solid #fff; border-radius: 7px; box-sizing: border-box; line-height: 34px; text-align: center; font-weight: 500; }
.go { width: 123px; height: 36px; margin-left: 12px; border-radius: 7px; background: #fff; color: #111; box-sizing: border-box; display: flex; align-items: center; padding-left: 12px; gap: 7px; letter-spacing: .1px; }
.tools { height: 72px; background: #2c2c2c; border-radius: 18px; border: 1px solid #3d3d3d; box-sizing: border-box; display: flex; align-items: center; box-shadow: 0 -1px 4px rgba(0, 0, 0, .4); }
.tools svg { fill: none; stroke: #fff; stroke-width: 1.500; stroke-linejoin: round; }
.t-move { margin-left: 22.500px; }
.hand { width: 48px; height: 48px; margin-left: 21.500px; border-radius: 7px; background: #0d8ce9; display: flex; align-items: center; justify-content: center; flex: none; padding-right: 2px; box-sizing: border-box; }
.t-com { margin-left: 23px; }
.sep { width: 1.500px; height: 70px; background: #444; flex: none; }
.s1 { margin-left: 23px; }
.t-frame { margin-left: 23.500px; }
.cv { margin-left: 18.500px; }
.t-rect { margin-left: 31.500px; }
.cv.b { margin-left: 20px; }
.t-pen { margin-left: 31.500px; }
.cv.c { margin-left: 17px; }
.t-text { margin-left: 31.500px; }
.t-comp { margin-left: 35.500px; }
.s2 { margin-left: 23px; }
.dev { width: 59px; height: 36px; margin-left: 19.500px; background: #383838; border-radius: 7px; display: flex; align-items: center; flex: none; }
.dev b { width: 33px; height: 33px; background: #2c2c2c; border: 1px solid #484848; border-radius: 7px; box-sizing: border-box; display: flex; align-items: center; justify-content: center; box-shadow: 0 1px 3px rgba(0, 0, 0, .5); }

.taskbar { height: 72px; margin-top: 6px; flex: none; position: relative; display: flex; box-sizing: border-box; border-top: 2px solid rgba(120, 110, 110, .4); background: linear-gradient(90deg, #2f2317 0, #35221a 100px, #3c1e1d 165px, #2d2022 230px, #2a2023 400px, #251f2a 560px, #2a1d2a 620px, #20202a 690px, #212121 760px, #212121 1480px, #351c22 1560px, #48191f 1640px, #49191a 1690px, #3d2119 1760px, #37251c 1840px, #2e2721 1920px); background-clip: padding-box; }
.weather { width: 534px; padding-left: 29px; box-sizing: border-box; display: flex; flex: none; }
.wicon { position: relative; width: 41px; margin-top: 7px; }
.wicon span { position: absolute; left: 16.500px; top: 0; width: 24px; height: 24px; border-radius: 12px; background: #ff99a4; color: #111; text-align: center; font-size: 16px; line-height: 24px; }
.weather p { display: flex; flex-direction: column; margin-left: 6px; margin-top: 10px; font-size: 17px; line-height: 24px; letter-spacing: -.4px; }
.weather small { font-size: 17px; color: #c9c4c0; letter-spacing: -.25px; }
.apps { display: flex; gap: 6.120px; height: 60px; margin-top: 4px; flex: none; margin-left: -.5px; color: #212121; }
.app { width: 60px; height: 60px; border-radius: 6px; display: flex; align-items: center; justify-content: center; position: relative; box-sizing: border-box; flex: none; }
.app.on { background: rgba(255, 255, 255, .07); box-shadow: inset 0 0 0 1px rgba(255, 255, 255, .06); }
.bar { position: absolute; bottom: 1px; left: 18px; width: 24px; height: 5px; border-radius: 2.500px; background: #da8fe0; }
.dot { position: absolute; bottom: 1px; left: 25.500px; width: 9px; height: 5px; border-radius: 2.500px; background: #9a9a9a; }
.badge { position: absolute; left: 28.500px; top: 5px; width: 31px; height: 24px; border-radius: 12px; background: #da8fe0; color: #111; font-size: 16px; line-height: 24px; text-align: center; letter-spacing: -.5px; }
.badge.teal { left: 32px; width: 24px; background: #0b8f9c; color: #e8fbff; font-size: 14px; }
.tray { flex: 1; display: flex; align-items: center; height: 66px; padding-right: 29px; }
.tray > svg:first-child { margin-left: 149.500px; }
.od { margin-left: 26.500px; }
.sy { margin-left: 24px; }
.wf { margin-left: 23px; }
.sp { margin-left: 11px; }
.bt { margin-left: 10.500px; }
.clock { margin-left: auto; display: flex; flex-direction: column; text-align: right; font-size: 17.500px; line-height: 24px; letter-spacing: 0; margin-top: 1px; }
</style>
